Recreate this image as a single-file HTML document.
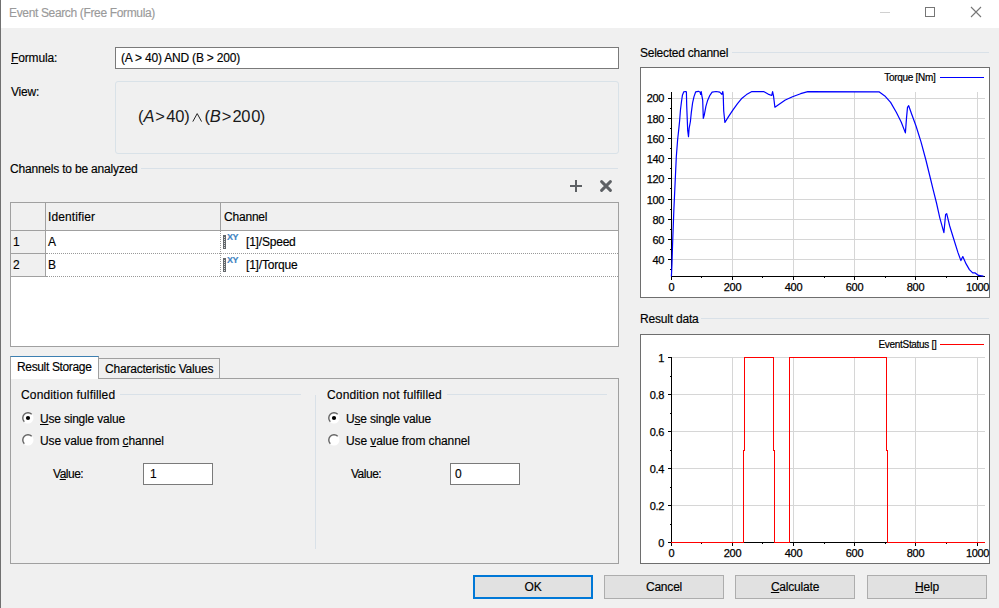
<!DOCTYPE html>
<html><head><meta charset="utf-8">
<style>
html,body{margin:0;padding:0;}
body{width:999px;height:608px;position:relative;overflow:hidden;background:#f0f0f0;font-family:"Liberation Sans",sans-serif;font-size:12px;color:#000;}
.a{position:absolute;}
.t{position:absolute;white-space:nowrap;line-height:12px;font-size:12px;letter-spacing:-0.2px;-webkit-text-stroke:0.15px currentColor;}
.u{text-decoration:underline;text-decoration-thickness:1px;text-underline-offset:0.5px;}
.box{position:absolute;box-sizing:border-box;}
.sep{position:absolute;height:1px;background:#d9e1e8;}
.btn{position:absolute;box-sizing:border-box;height:24px;width:120px;background:#e1e1e1;border:1px solid #adadad;}
.btn .t{left:0;right:0;text-align:center;top:5px;}
.rb{position:absolute;width:12px;height:12px;}
</style></head>
<body>
<!-- title bar -->
<div class="a" style="left:0;top:0;width:999px;height:28px;background:#fff;"></div>
<div class="a" style="left:0;top:0;width:1px;height:608px;background:#707070;"></div>
<div class="t" style="left:9px;top:7px;color:#9a9a9a;letter-spacing:-0.35px;">Event Search (Free Formula)</div>
<div class="a" style="left:880px;top:12px;width:10px;height:1px;background:#d0d0d0;"></div>
<div class="box" style="left:925px;top:7px;width:10px;height:10px;border:1px solid #767676;"></div>
<svg class="a" style="left:970px;top:6px" width="12" height="12"><path d="M1 1 L11 11 M11 1 L1 11" stroke="#767676" stroke-width="1.1"/></svg>

<!-- formula -->
<div class="t" style="left:11px;top:52px;letter-spacing:-0.15px;"><span class="u">F</span>ormula:</div>
<div class="box" style="left:115px;top:47px;width:504px;height:22px;background:#fff;border:1px solid #7a7a7a;"></div>
<div class="t" style="left:121px;top:52px;">(A &gt; 40) AND (B &gt; 200)</div>
<div class="t" style="left:11px;top:86px;">View:</div>
<div class="box" style="left:115px;top:81px;width:504px;height:73px;border:1px solid #d9e2e8;border-radius:3px;"></div>
<div class="a" style="left:0;top:106px;font-size:16.5px;line-height:20px;color:#1a1a1a;"><span class="a" style="left:138px;top:0">(</span><span class="a" style="left:143.5px;top:0"><i>A</i></span><span class="a" style="left:155.3px;top:0">&gt;</span><span class="a" style="left:166.3px;top:0">4</span><span class="a" style="left:175.2px;top:0">0</span><span class="a" style="left:184.3px;top:0">)</span><span class="a" style="left:204.5px;top:0">(</span><span class="a" style="left:209.8px;top:0"><i>B</i></span><span class="a" style="left:221.7px;top:0">&gt;</span><span class="a" style="left:232.5px;top:0">2</span><span class="a" style="left:241.3px;top:0">0</span><span class="a" style="left:251.2px;top:0">0</span><span class="a" style="left:259.8px;top:0">)</span></div>
<svg class="a" style="left:190px;top:110px" width="14" height="14"><path d="M2.8 11.6 L7.2 3.6 L11.6 11.6" fill="none" stroke="#222" stroke-width="1"/></svg>

<!-- channels -->
<div class="t" style="left:10px;top:163px;">Channels to be analyzed</div>
<div class="sep" style="left:141px;top:168px;width:477px;"></div>
<svg class="a" style="left:569px;top:179px" width="14" height="14"><path d="M7 1 V13 M1 7 H13" stroke="#5d6064" stroke-width="2"/></svg>
<svg class="a" style="left:600px;top:180px" width="13" height="13"><path d="M1.6 1.6 L10.4 10.4 M10.4 1.6 L1.6 10.4" stroke="#5d6064" stroke-width="2.9" stroke-linecap="round"/></svg>

<div class="box" style="left:10px;top:202px;width:609px;height:145px;background:#fff;border:1px solid #a0a0a0;"></div>
<div class="a" style="left:11px;top:203px;width:607px;height:27px;background:#f0f0f0;"></div>
<div class="a" style="left:11px;top:230px;width:607px;height:1px;background:#a0a0a0;"></div>
<div class="a" style="left:11px;top:231px;width:34px;height:45px;background:#f0f0f0;"></div>
<div class="a" style="left:45px;top:203px;width:1px;height:74px;background:#a0a0a0;"></div>
<div class="a" style="left:11px;top:253px;width:34px;height:1px;background:#a0a0a0;"></div>
<div class="a" style="left:11px;top:276px;width:35px;height:1px;background:#a0a0a0;"></div>
<div class="a" style="left:220px;top:203px;width:1px;height:27px;background:#a0a0a0;"></div>
<div class="a" style="left:46px;top:253px;width:572px;height:0;border-top:1px dotted #999;"></div>
<div class="a" style="left:46px;top:276px;width:572px;height:0;border-top:1px dotted #999;"></div>
<div class="a" style="left:220px;top:231px;width:0;height:45px;border-left:1px dotted #999;"></div>
<div class="t" style="left:48px;top:211px;letter-spacing:0.1px;">Identifier</div>
<div class="t" style="left:224px;top:211px;">Channel</div>
<div class="t" style="left:13px;top:236px;">1</div>
<div class="t" style="left:48px;top:236px;">A</div>
<div class="t" style="left:13px;top:259px;">2</div>
<div class="t" style="left:48px;top:259px;">B</div>
<div class="a" style="left:223px;top:235px;width:3px;height:14px;box-sizing:border-box;border:1px solid #62676b;background:repeating-linear-gradient(#62676b 0 1px,#d8d8d8 1px 2px);"></div>
<div class="t" style="left:227px;top:233px;font-size:9px;line-height:9px;color:#3f84c2;font-weight:bold;letter-spacing:-0.4px;">XY</div>
<div class="t" style="left:246px;top:236px;">[1]/Speed</div>
<div class="a" style="left:223px;top:258px;width:3px;height:14px;box-sizing:border-box;border:1px solid #62676b;background:repeating-linear-gradient(#62676b 0 1px,#d8d8d8 1px 2px);"></div>
<div class="t" style="left:227px;top:256px;font-size:9px;line-height:9px;color:#3f84c2;font-weight:bold;letter-spacing:-0.4px;">XY</div>
<div class="t" style="left:246px;top:259px;">[1]/Torque</div>

<!-- tabs -->
<div class="box" style="left:10px;top:378px;width:609px;height:186px;border:1px solid #a0a0a0;"></div>
<div class="box" style="left:98px;top:358px;width:122px;height:21px;border:1px solid #a0a0a0;background:#f0f0f0;"></div>
<div class="box" style="left:10px;top:356px;width:89px;height:23px;border:1px solid #a0a0a0;border-bottom:none;border-top:1px solid #3c7fb1;background:#fff;"></div>
<div class="t" style="left:17px;top:361px;letter-spacing:-0.35px;">Result Storage</div>
<div class="t" style="left:105px;top:363px;">Characteristic Values</div>

<div class="t" style="left:21px;top:389px;letter-spacing:0.15px;">Condition fulfilled</div>
<div class="sep" style="left:120px;top:394px;width:181px;"></div>
<svg class="rb" style="left:22px;top:412px" width="12" height="12"><circle cx="6" cy="6" r="5.5" fill="#fff"/><path d="M2.3 9.7 A5.2 5.2 0 0 1 9.7 2.3" fill="none" stroke="#646464" stroke-width="1.4"/><circle cx="6" cy="6" r="2.1" fill="#000"/></svg>
<div class="t" style="left:40px;top:413px;"><span class="u">U</span>se single value</div>
<svg class="rb" style="left:22px;top:434px" width="12" height="12"><circle cx="6" cy="6" r="5.5" fill="#fff"/><path d="M2.3 9.7 A5.2 5.2 0 0 1 9.7 2.3" fill="none" stroke="#646464" stroke-width="1.4"/></svg>
<div class="t" style="left:40px;top:435px;letter-spacing:-0.1px;">Use value from <span class="u">c</span>hannel</div>
<div class="t" style="left:53px;top:468px;letter-spacing:-0.5px;">V<span class="u">a</span>lue:</div>
<div class="box" style="left:143px;top:463px;width:70px;height:22px;background:#fff;border:1px solid #7a7a7a;"></div>
<div class="t" style="left:150px;top:468px;">1</div>

<div class="a" style="left:315px;top:395px;width:1px;height:154px;background:#d9e1e8;"></div>

<div class="t" style="left:327px;top:389px;letter-spacing:0.15px;">Condition not fulfilled</div>
<div class="sep" style="left:447px;top:394px;width:160px;"></div>
<svg class="rb" style="left:328px;top:412px" width="12" height="12"><circle cx="6" cy="6" r="5.5" fill="#fff"/><path d="M2.3 9.7 A5.2 5.2 0 0 1 9.7 2.3" fill="none" stroke="#646464" stroke-width="1.4"/><circle cx="6" cy="6" r="2.1" fill="#000"/></svg>
<div class="t" style="left:346px;top:413px;">U<span class="u">s</span>e single value</div>
<svg class="rb" style="left:328px;top:434px" width="12" height="12"><circle cx="6" cy="6" r="5.5" fill="#fff"/><path d="M2.3 9.7 A5.2 5.2 0 0 1 9.7 2.3" fill="none" stroke="#646464" stroke-width="1.4"/></svg>
<div class="t" style="left:346px;top:435px;letter-spacing:-0.1px;">Use <span class="u">v</span>alue from channel</div>
<div class="t" style="left:351px;top:468px;letter-spacing:-0.5px;">Value:</div>
<div class="box" style="left:450px;top:463px;width:70px;height:22px;background:#fff;border:1px solid #7a7a7a;"></div>
<div class="t" style="left:455px;top:468px;">0</div>

<!-- right panel -->
<div class="t" style="left:640px;top:47px;letter-spacing:-0.25px;">Selected channel</div>
<div class="sep" style="left:732px;top:52px;width:257px;"></div>
<div class="box" style="left:640px;top:67px;width:350px;height:231px;background:#fff;border:1px solid #6e6e6e;"></div>

<div class="t" style="left:640px;top:313px;">Result data</div>
<div class="sep" style="left:701px;top:318px;width:288px;"></div>
<div class="box" style="left:640px;top:334px;width:350px;height:230px;background:#fff;border:1px solid #6e6e6e;"></div>

<!--CHARTS-->
<svg class="a" style="left:0;top:0" width="999" height="608" viewBox="0 0 999 608">
<g shape-rendering="crispEdges" stroke-width="1">
<line x1="672" y1="98.5" x2="985" y2="98.5" stroke="#d6d6d6"/>
<line x1="672" y1="118.5" x2="985" y2="118.5" stroke="#d6d6d6"/>
<line x1="672" y1="138.5" x2="985" y2="138.5" stroke="#d6d6d6"/>
<line x1="672" y1="158.5" x2="985" y2="158.5" stroke="#d6d6d6"/>
<line x1="672" y1="178.5" x2="985" y2="178.5" stroke="#d6d6d6"/>
<line x1="672" y1="199.5" x2="985" y2="199.5" stroke="#d6d6d6"/>
<line x1="672" y1="219.5" x2="985" y2="219.5" stroke="#d6d6d6"/>
<line x1="672" y1="239.5" x2="985" y2="239.5" stroke="#d6d6d6"/>
<line x1="672" y1="259.5" x2="985" y2="259.5" stroke="#d6d6d6"/>
<line x1="732.5" y1="92" x2="732.5" y2="276" stroke="#d6d6d6"/>
<line x1="793.5" y1="92" x2="793.5" y2="276" stroke="#d6d6d6"/>
<line x1="854.5" y1="92" x2="854.5" y2="276" stroke="#d6d6d6"/>
<line x1="915.5" y1="92" x2="915.5" y2="276" stroke="#d6d6d6"/>
<line x1="977.5" y1="92" x2="977.5" y2="276" stroke="#d6d6d6"/>
<line x1="671.5" y1="92" x2="671.5" y2="277" stroke="#000"/>
<line x1="671" y1="276.5" x2="985" y2="276.5" stroke="#000"/>
<line x1="668" y1="98.5" x2="671" y2="98.5" stroke="#000"/>
<line x1="668" y1="118.5" x2="671" y2="118.5" stroke="#000"/>
<line x1="668" y1="138.5" x2="671" y2="138.5" stroke="#000"/>
<line x1="668" y1="158.5" x2="671" y2="158.5" stroke="#000"/>
<line x1="668" y1="178.5" x2="671" y2="178.5" stroke="#000"/>
<line x1="668" y1="199.5" x2="671" y2="199.5" stroke="#000"/>
<line x1="668" y1="219.5" x2="671" y2="219.5" stroke="#000"/>
<line x1="668" y1="239.5" x2="671" y2="239.5" stroke="#000"/>
<line x1="668" y1="259.5" x2="671" y2="259.5" stroke="#000"/>
<line x1="670" y1="108.5" x2="671" y2="108.5" stroke="#000"/>
<line x1="670" y1="128.5" x2="671" y2="128.5" stroke="#000"/>
<line x1="670" y1="148.5" x2="671" y2="148.5" stroke="#000"/>
<line x1="670" y1="168.5" x2="671" y2="168.5" stroke="#000"/>
<line x1="670" y1="188.5" x2="671" y2="188.5" stroke="#000"/>
<line x1="670" y1="209.5" x2="671" y2="209.5" stroke="#000"/>
<line x1="670" y1="229.5" x2="671" y2="229.5" stroke="#000"/>
<line x1="670" y1="249.5" x2="671" y2="249.5" stroke="#000"/>
<line x1="670" y1="269.5" x2="671" y2="269.5" stroke="#000"/>
<line x1="671.5" y1="277" x2="671.5" y2="280" stroke="#000"/>
<line x1="732.5" y1="277" x2="732.5" y2="280" stroke="#000"/>
<line x1="793.5" y1="277" x2="793.5" y2="280" stroke="#000"/>
<line x1="854.5" y1="277" x2="854.5" y2="280" stroke="#000"/>
<line x1="915.5" y1="277" x2="915.5" y2="280" stroke="#000"/>
<line x1="977.5" y1="277" x2="977.5" y2="280" stroke="#000"/>
<line x1="701.5" y1="277" x2="701.5" y2="278" stroke="#000"/>
<line x1="762.5" y1="277" x2="762.5" y2="278" stroke="#000"/>
<line x1="824.5" y1="277" x2="824.5" y2="278" stroke="#000"/>
<line x1="885.5" y1="277" x2="885.5" y2="278" stroke="#000"/>
<line x1="946.5" y1="277" x2="946.5" y2="278" stroke="#000"/>
</g>
<text x="664" y="102" text-anchor="end" font-family="Liberation Sans" font-size="11" letter-spacing="-0.35" stroke="#000" stroke-width="0.25">200</text>
<text x="664" y="123" text-anchor="end" font-family="Liberation Sans" font-size="11" letter-spacing="-0.35" stroke="#000" stroke-width="0.25">180</text>
<text x="664" y="143" text-anchor="end" font-family="Liberation Sans" font-size="11" letter-spacing="-0.35" stroke="#000" stroke-width="0.25">160</text>
<text x="664" y="163" text-anchor="end" font-family="Liberation Sans" font-size="11" letter-spacing="-0.35" stroke="#000" stroke-width="0.25">140</text>
<text x="664" y="183" text-anchor="end" font-family="Liberation Sans" font-size="11" letter-spacing="-0.35" stroke="#000" stroke-width="0.25">120</text>
<text x="664" y="204" text-anchor="end" font-family="Liberation Sans" font-size="11" letter-spacing="-0.35" stroke="#000" stroke-width="0.25">100</text>
<text x="664" y="224" text-anchor="end" font-family="Liberation Sans" font-size="11" letter-spacing="-0.35" stroke="#000" stroke-width="0.25">80</text>
<text x="664" y="244" text-anchor="end" font-family="Liberation Sans" font-size="11" letter-spacing="-0.35" stroke="#000" stroke-width="0.25">60</text>
<text x="664" y="264" text-anchor="end" font-family="Liberation Sans" font-size="11" letter-spacing="-0.35" stroke="#000" stroke-width="0.25">40</text>
<text x="671.5" y="291" text-anchor="middle" font-family="Liberation Sans" font-size="11" letter-spacing="-0.35" stroke="#000" stroke-width="0.25">0</text>
<text x="732.5" y="291" text-anchor="middle" font-family="Liberation Sans" font-size="11" letter-spacing="-0.35" stroke="#000" stroke-width="0.25">200</text>
<text x="793.5" y="291" text-anchor="middle" font-family="Liberation Sans" font-size="11" letter-spacing="-0.35" stroke="#000" stroke-width="0.25">400</text>
<text x="854.5" y="291" text-anchor="middle" font-family="Liberation Sans" font-size="11" letter-spacing="-0.35" stroke="#000" stroke-width="0.25">600</text>
<text x="915.5" y="291" text-anchor="middle" font-family="Liberation Sans" font-size="11" letter-spacing="-0.35" stroke="#000" stroke-width="0.25">800</text>
<text x="977.5" y="291" text-anchor="middle" font-family="Liberation Sans" font-size="11" letter-spacing="-0.35" stroke="#000" stroke-width="0.25">1000</text>
<text x="935.5" y="81" text-anchor="end" font-family="Liberation Sans" font-size="10" letter-spacing="-0.3" stroke="#000" stroke-width="0.2">Torque [Nm]</text>
<line x1="940" y1="77.5" x2="984" y2="77.5" stroke="#0000ff" shape-rendering="crispEdges"/>
<path d="M671.4 276.5 L671.9 265.8 L672.6 243.6 L673.9 209.0 L675.1 183.0 L676.3 157.0 L677.6 140.0 L678.7 129.9 L679.6 121.0 L680.5 109.5 L681.5 101.5 L682.4 95.3 L683.8 91.8 L685.5 91.5 L686.4 91.8 L686.7 105.5 L687.7 130.4 L688.5 136.6 L689.1 128.6 L690.4 121.5 L691.3 112.6 L692.6 102.9 L694.0 96.6 L695.7 91.8 L698.4 91.3 L700.2 92.2 L700.6 94.4 L701.2 91.5 L701.9 95.8 L702.7 100.2 L703.3 118.4 L704.2 115.3 L705.9 106.4 L707.7 100.2 L709.9 95.3 L712.1 92.2 L716.1 91.5 L719.7 92.2 L721.9 94.4 L722.8 91.5 L723.2 94.4 L723.7 110.8 L724.9 122.5 L728.5 116.6 L733.0 109.9 L737.5 103.6 L742.0 98.2 L746.5 94.6 L751.9 91.6 L763.6 91.6 L768.1 94.1 L771.7 95.5 L772.6 91.6 L773.5 95.9 L774.9 107.2 L778.1 104.9 L785.3 100.0 L792.5 96.8 L800.6 93.7 L807.8 91.6 L879.0 91.8 L884.8 95.9 L890.6 102.4 L896.3 112.3 L901.3 122.2 L905.4 132.9 L906.5 118.1 L907.5 107.4 L908.7 105.7 L911.9 114.8 L916.1 126.3 L921.0 141.9 L925.9 160.0 L930.8 180.0 L933.2 189.9 L936.5 203.0 L939.8 217.8 L943.9 232.6 L945.6 214.5 L946.7 213.7 L949.7 226.0 L953.8 239.2 L957.9 252.4 L960.9 260.6 L962.8 256.5 L966.1 263.9 L969.4 269.6 L972.7 272.9 L975.2 272.9 L978.5 275.4 L983.4 276.2" fill="none" stroke="#0000ff" stroke-width="1.2" stroke-linejoin="round"/>
</svg>
<svg class="a" style="left:0;top:0" width="999" height="608" viewBox="0 0 999 608">
<g shape-rendering="crispEdges" stroke-width="1">
<line x1="672" y1="357.5" x2="985" y2="357.5" stroke="#d6d6d6"/>
<line x1="672" y1="394.5" x2="985" y2="394.5" stroke="#d6d6d6"/>
<line x1="672" y1="431.5" x2="985" y2="431.5" stroke="#d6d6d6"/>
<line x1="672" y1="468.5" x2="985" y2="468.5" stroke="#d6d6d6"/>
<line x1="672" y1="505.5" x2="985" y2="505.5" stroke="#d6d6d6"/>
<line x1="732.5" y1="357" x2="732.5" y2="542" stroke="#d6d6d6"/>
<line x1="793.5" y1="357" x2="793.5" y2="542" stroke="#d6d6d6"/>
<line x1="854.5" y1="357" x2="854.5" y2="542" stroke="#d6d6d6"/>
<line x1="915.5" y1="357" x2="915.5" y2="542" stroke="#d6d6d6"/>
<line x1="977.5" y1="357" x2="977.5" y2="542" stroke="#d6d6d6"/>
<line x1="671.5" y1="357" x2="671.5" y2="543" stroke="#000"/>
<line x1="671" y1="542.5" x2="985" y2="542.5" stroke="#000"/>
<line x1="668" y1="357.5" x2="671" y2="357.5" stroke="#000"/>
<line x1="668" y1="394.5" x2="671" y2="394.5" stroke="#000"/>
<line x1="668" y1="431.5" x2="671" y2="431.5" stroke="#000"/>
<line x1="668" y1="468.5" x2="671" y2="468.5" stroke="#000"/>
<line x1="668" y1="505.5" x2="671" y2="505.5" stroke="#000"/>
<line x1="668" y1="542.5" x2="671" y2="542.5" stroke="#000"/>
<line x1="670" y1="376.5" x2="671" y2="376.5" stroke="#000"/>
<line x1="670" y1="413.5" x2="671" y2="413.5" stroke="#000"/>
<line x1="670" y1="450.5" x2="671" y2="450.5" stroke="#000"/>
<line x1="670" y1="487.5" x2="671" y2="487.5" stroke="#000"/>
<line x1="670" y1="524.5" x2="671" y2="524.5" stroke="#000"/>
<line x1="671.5" y1="543" x2="671.5" y2="546" stroke="#000"/>
<line x1="732.5" y1="543" x2="732.5" y2="546" stroke="#000"/>
<line x1="793.5" y1="543" x2="793.5" y2="546" stroke="#000"/>
<line x1="854.5" y1="543" x2="854.5" y2="546" stroke="#000"/>
<line x1="915.5" y1="543" x2="915.5" y2="546" stroke="#000"/>
<line x1="977.5" y1="543" x2="977.5" y2="546" stroke="#000"/>
<line x1="701.5" y1="543" x2="701.5" y2="544" stroke="#000"/>
<line x1="762.5" y1="543" x2="762.5" y2="544" stroke="#000"/>
<line x1="824.5" y1="543" x2="824.5" y2="544" stroke="#000"/>
<line x1="885.5" y1="543" x2="885.5" y2="544" stroke="#000"/>
<line x1="946.5" y1="543" x2="946.5" y2="544" stroke="#000"/>
<path d="M671 542.5 H743.5 V450 H744.5 V357.5 H773.5 V450 H774.5 V542.5 H789.5 V357.5 H886.5 V450 H887.5 V542.5 H985" fill="none" stroke="#ff0000" stroke-width="1"/>
</g>
<text x="664" y="362" text-anchor="end" font-family="Liberation Sans" font-size="11" letter-spacing="-0.35" stroke="#000" stroke-width="0.25">1</text>
<text x="664" y="399" text-anchor="end" font-family="Liberation Sans" font-size="11" letter-spacing="-0.35" stroke="#000" stroke-width="0.25">0.8</text>
<text x="664" y="436" text-anchor="end" font-family="Liberation Sans" font-size="11" letter-spacing="-0.35" stroke="#000" stroke-width="0.25">0.6</text>
<text x="664" y="473" text-anchor="end" font-family="Liberation Sans" font-size="11" letter-spacing="-0.35" stroke="#000" stroke-width="0.25">0.4</text>
<text x="664" y="510" text-anchor="end" font-family="Liberation Sans" font-size="11" letter-spacing="-0.35" stroke="#000" stroke-width="0.25">0.2</text>
<text x="664" y="547" text-anchor="end" font-family="Liberation Sans" font-size="11" letter-spacing="-0.35" stroke="#000" stroke-width="0.25">0</text>
<text x="671.5" y="557" text-anchor="middle" font-family="Liberation Sans" font-size="11" letter-spacing="-0.35" stroke="#000" stroke-width="0.25">0</text>
<text x="732.5" y="557" text-anchor="middle" font-family="Liberation Sans" font-size="11" letter-spacing="-0.35" stroke="#000" stroke-width="0.25">200</text>
<text x="793.5" y="557" text-anchor="middle" font-family="Liberation Sans" font-size="11" letter-spacing="-0.35" stroke="#000" stroke-width="0.25">400</text>
<text x="854.5" y="557" text-anchor="middle" font-family="Liberation Sans" font-size="11" letter-spacing="-0.35" stroke="#000" stroke-width="0.25">600</text>
<text x="915.5" y="557" text-anchor="middle" font-family="Liberation Sans" font-size="11" letter-spacing="-0.35" stroke="#000" stroke-width="0.25">800</text>
<text x="977.5" y="557" text-anchor="middle" font-family="Liberation Sans" font-size="11" letter-spacing="-0.35" stroke="#000" stroke-width="0.25">1000</text>
<text x="936.5" y="348" text-anchor="end" font-family="Liberation Sans" font-size="10" letter-spacing="-0.3" stroke="#000" stroke-width="0.2">EventStatus []</text>
<line x1="940" y1="344.5" x2="984" y2="344.5" stroke="#ff0000" shape-rendering="crispEdges"/>
</svg>
<!--/CHARTS-->

<!-- buttons -->
<div class="btn" style="left:473px;top:575px;border:2px solid #0078d7;"><div class="t" style="top:4px;">OK</div></div>
<div class="btn" style="left:604px;top:575px;"><div class="t">Cancel</div></div>
<div class="btn" style="left:735px;top:575px;"><div class="t"><span class="u">C</span>alculate</div></div>
<div class="btn" style="left:867px;top:575px;"><div class="t"><span class="u">H</span>elp</div></div>
</body></html>
